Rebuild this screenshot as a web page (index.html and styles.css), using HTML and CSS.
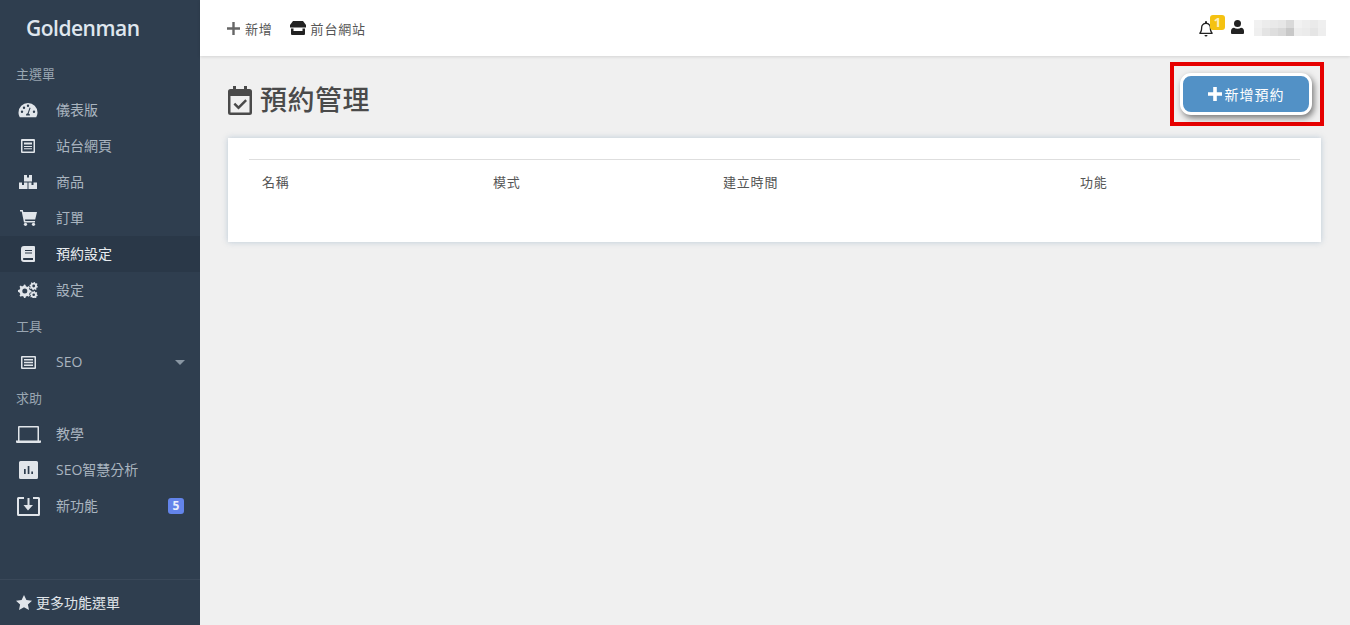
FILE: index.html
```html
<!DOCTYPE html>
<html lang="zh-Hant">
<head>
<meta charset="utf-8">
<title>預約管理</title>
<link rel="stylesheet" href="styles.css">
</head>
<body>
<div class="app">
  <aside class="sidebar">
    <div class="logo">Goldenman</div>
    <nav class="menu">
      <div class="label label-first">主選單</div>
      <a class="item"><span class="ico"><svg width="20" height="16" viewBox="0 0 20 16"><path class="f" fill-rule="evenodd" d="M10 1a9.500 9.500 0 0 0-9.500 9.500c0 1.700.5 3.300 1.300 4.700h16.400c.8-1.400 1.300-3 1.300-4.700A9.500 9.500 0 0 0 10 1zM4 11a1.200 1.200 0 1 1 0-2.400A1.200 1.200 0 0 1 4 11zm2-4a1.200 1.200 0 1 1 0-2.400A1.200 1.200 0 0 1 6 7zm4-2a1.200 1.200 0 1 1 0-2.400A1.200 1.200 0 0 1 10 5zm2 8.500H8a2 2 0 0 1 1.600-2.300l2-5.700 1 .4-2 5.500a2 2 0 0 1 1.400 2.100zM16 11a1.200 1.200 0 1 1 0-2.400 1.200 1.200 0 0 1 0 2.400z"/></svg></span><span class="txt">儀表版</span></a>
      <a class="item"><span class="ico"><svg width="14" height="14" viewBox="0 0 14 14"><path class="f" fill-rule="evenodd" d="M1 0h12a1 1 0 0 1 1 1v12a1 1 0 0 1-1 1H1a1 1 0 0 1-1-1V1a1 1 0 0 1 1-1zm.5 2v10.500h11V2zM3 3.500h8v2H3zM3 7h8v1H3zm0 2.200h8v1H3z"/></svg></span><span class="txt">站台網頁</span></a>
      <a class="item"><span class="ico"><svg width="18" height="16" viewBox="0 0 18 16"><path class="f" fill-rule="evenodd" d="M5 1h8v6.500H5zM8 1v2.500h2V1zM0 8.500h8.500V15H0zm3 0V11h2V8.500zm6.500 0H18V15H9.500zm3 0V11h2V8.500z"/></svg></span><span class="txt">商品</span></a>
      <a class="item"><span class="ico"><svg width="17" height="16" viewBox="0 0 17 16"><path class="f" d="M0 0h2.800l.5 2H17l-1.800 7.500H5l.3 1.500h9.700v1.500H4L1.700 1.500H0z"/><circle class="f" cx="5.500" cy="14.300" r="1.600"/><circle class="f" cx="13.500" cy="14.300" r="1.600"/></svg></span><span class="txt">訂單</span></a>
      <a class="item active"><span class="ico"><svg width="14" height="16" viewBox="0 0 14 16"><path class="f" fill-rule="evenodd" d="M3 0h10a1 1 0 0 1 1 1v14a1 1 0 0 1-1 1H3a3 3 0 0 1-3-3V3a3 3 0 0 1 3-3zm1 4v1h7V4zm0 2.500v1h7v-1zM2 13c0 .6.400 1 1 1h9v-2H3c-.6 0-1 .4-1 1z"/></svg></span><span class="txt">預約設定</span></a>
      <a class="item"><span class="ico"><svg width="20" height="16" viewBox="0 0 20 16"><path class="f" fill-rule="evenodd" d="M6 2.500l1.400.3.500 1.500 1.500.6 1.300-.8 1.200 1.200-.8 1.300.6 1.500 1.500.4v1.800l-1.500.4-.6 1.500.8 1.300-1.200 1.200-1.300-.8-1.500.6-.5 1.500H6l-.5-1.500-1.500-.6-1.300.8-1.200-1.200.8-1.300-.6-1.500L0 9.800V8l1.700-.4.600-1.500-.8-1.300L2.700 3.600l1.300.8 1.500-.6zM6.800 6.400a2.500 2.500 0 1 0 0 5 2.500 2.500 0 0 0 0-5zM16 0l1 .2.200 1 .8.400.9-.4.600.9-.6.800.1 1 .9.500-.2 1-1 .2-.5.800.4.900-.9.600-.8-.6-1 .1-.5.900-1-.2-.2-1-.8-.5-.9.400-.6-.9.600-.8-.1-1-.9-.5.200-1 1-.2.500-.8-.4-.9.900-.6.800.6 1-.1zm-.3 2.600a1.400 1.400 0 1 0 0 2.800 1.400 1.400 0 0 0 0-2.800zM16 9l.9.200.2.900.8.400.8-.4.600.8-.5.700.1 1 .8.500-.2.900-.9.200-.5.700.4.800-.8.600-.7-.5-1 .1-.5.800-.9-.2-.2-.9-.7-.5-.8.400-.6-.8.500-.7-.1-1-.8-.5.200-.9.900-.2.500-.7-.4-.8.800-.6.700.5 1-.1zm-.3 2.400a1.300 1.300 0 1 0 0 2.600 1.300 1.300 0 0 0 0-2.600z"/></svg></span><span class="txt">設定</span></a>
      <div class="label">工具</div>
      <a class="item"><span class="ico"><svg width="15" height="13" viewBox="0 0 15 13"><path class="f" fill-rule="evenodd" d="M1 0h13a1 1 0 0 1 1 1v11a1 1 0 0 1-1 1H1a1 1 0 0 1-1-1V1a1 1 0 0 1 1-1zm.5 1.500v10h12v-10zM3 3h9v1.500H3zm0 2.800h9v1.500H3zm0 2.700h9V10H3z"/></svg></span><span class="txt grow">SEO</span><span class="caret"></span></a>
      <div class="label">求助</div>
      <a class="item"><span class="ico"><svg width="25" height="17" viewBox="0 0 25 17"><path class="f" fill-rule="evenodd" d="M3 0h19a1 1 0 0 1 1 1v13.500h-1.500V1.500h-18v13H2V1a1 1 0 0 1 1-1zM0 14.500h25V16a1 1 0 0 1-1 1H1a1 1 0 0 1-1-1z"/></svg></span><span class="txt">教學</span></a>
      <a class="item"><span class="ico"><svg width="19" height="18" viewBox="0 0 19 18"><path class="f" fill-rule="evenodd" d="M1.500 0h16A1.500 1.500 0 0 1 19 1.500v15a1.500 1.500 0 0 1-1.500 1.500h-16A1.500 1.500 0 0 1 0 16.500v-15A1.500 1.500 0 0 1 1.500 0zM5 8v5h1.700V8zm3.700-3v8h1.700V5zm3.600 5.500V13H14v-2.500z"/></svg></span><span class="txt">SEO智慧分析</span></a>
      <a class="item"><span class="ico"><svg width="23" height="19" viewBox="0 0 23 19"><path class="f" fill-rule="evenodd" d="M1.500 0H7v2H2v15h19V2h-5V0h5.500A1.500 1.500 0 0 1 23 1.500v16a1.500 1.500 0 0 1-1.500 1.500h-20A1.500 1.500 0 0 1 0 17.500v-16A1.500 1.500 0 0 1 1.500 0zM10.500 1h2v7h3.500l-5 5.500L6.500 8h4z"/></svg></span><span class="txt grow">新功能</span><span class="badge">5</span></a>
    </nav>
    <div class="more"><svg width="16" height="15" viewBox="0 0 16 15"><path class="f" d="M8 0l2.400 5 5.600.7-4.100 3.800 1.100 5.500L8 12.300 3 15l1.100-5.500L0 5.700 5.600 5z"/></svg><span class="txt">更多功能選單</span></div>
  </aside>
  <div class="main">
    <header class="topbar">
      <a class="tool"><svg width="13" height="13" viewBox="0 0 13 13"><path class="g" d="M5.300 0h2.400v5.300H13v2.400H7.700V13H5.300V7.700H0V5.300h5.300z"/></svg><span>新增</span></a>
      <a class="tool tool-store"><svg width="16" height="14" viewBox="0 0 16 14"><path class="d" fill-rule="evenodd" d="M3 0h10l3 4v2.500H0V4zM1 7.500h14V13a1 1 0 0 1-1 1H2a1 1 0 0 1-1-1zm2.500 0V10h9V7.500z"/></svg><span>前台網站</span></a>
      <div class="spacer"></div>
      <div class="bell"><svg width="14" height="16" viewBox="0 0 14 16"><path class="d" fill-rule="evenodd" d="M7 0a1 1 0 0 1 1 1v.8c2.300.4 4 2.400 4 4.700 0 2.800.7 4 1.600 5.200.3.400.1 1.300-.6 1.300H1c-.7 0-.9-.9-.6-1.300C1.300 10.500 2 9.300 2 6.500c0-2.300 1.700-4.300 4-4.700V1a1 1 0 0 1 1-1zm0 3C5 3 3.300 4.500 3.300 6.500c0 2.500-.5 4.100-1.200 5.300h9.800c-.7-1.200-1.200-2.800-1.200-5.300C10.700 4.500 9 3 7 3zM5.500 14h3a1.500 1.500 0 0 1-3 0z"/></svg><span class="bell-count">1</span></div>
      <svg class="user" width="13" height="14" viewBox="0 0 13 14"><circle class="d" cx="6.500" cy="3.500" r="3.500"/><path class="d" d="M3 7.800c1 .6 2.200 1 3.500 1s2.500-.4 3.500-1c1.800 0 3 1.400 3 3.200V13a1 1 0 0 1-1 1H1a1 1 0 0 1-1-1v-2c0-1.800 1.200-3.200 3-3.200z"/></svg>
      <div class="username"></div>
    </header>
    <main class="content">
      <div class="page-head">
        <h1 class="title"><svg width="24" height="29" viewBox="0 0 24 29"><path class="t" fill-rule="evenodd" d="M5 0h3v3h8V0h3v3h2.500A2.500 2.500 0 0 1 24 5.500v21a2.500 2.500 0 0 1-2.500 2.500h-19A2.500 2.500 0 0 1 0 26.500v-21A2.500 2.500 0 0 1 2.500 3H5zM2.500 10v16.500h19V10zm14.800 3.200l1.700 1.700-8.500 8.500-5-5 1.700-1.700 3.300 3.300z"/></svg><span>預約管理</span></h1>
        <div class="highlight"><button class="add-btn"><svg width="14" height="14" viewBox="0 0 14 14"><path class="w" d="M5.200 0h3.600v5.200H14v3.600H8.800V14H5.200V8.800H0V5.200h5.200z"/></svg><span>新增預約</span></button></div>
      </div>
      <section class="card">
        <table class="table">
          <thead>
            <tr><th class="c1">名稱</th><th class="c2">模式</th><th class="c3">建立時間</th><th>功能</th></tr>
          </thead>
        </table>
      </section>
    </main>
  </div>
</div>
</body>
</html>
```
FILE: styles.css
```css
* { box-sizing: border-box; }
html, body { margin: 0; height: 100%; overflow: hidden; }
body { font-family: "Open Sans", "Noto Sans CJK TC", sans-serif; font-size: 14px; color: #555; background: #f0f0f0; }
.app { display: flex; height: 625px; }
svg { display: block; flex: none; }
.f { fill: #e1e5ea; }
.g { fill: #666; }
.d { fill: #222; }
.t { fill: #4a4a4a; }
.w { fill: #fff; }

.sidebar { width: 200px; flex: none; background: #2f3e4f; display: flex; flex-direction: column; }
.logo { height: 57px; padding: 13px 0 0 26px; font-size: 21px; letter-spacing: -.5px; line-height: 30px; font-weight: 600; color: #dfe6ee; }
.menu { flex: 1; }
.label { height: 36px; line-height: 36px; padding-left: 16px; font-size: 13px; color: #9aa6b2; }
.label-first { height: 35px; line-height: 34px; }
.item { height: 36px; display: flex; align-items: center; padding-right: 16px; color: #a9b4bf; font-size: 14px; }
.txt { padding-bottom: 2px; }
.item.active { background: #2a3848; color: #e8ecf0; }
.ico { width: 56px; padding-left: 16px; display: flex; justify-content: center; padding-right: 16px; }
.grow { flex: 1; }
.caret { width: 0; height: 0; border-left: 5px solid transparent; border-right: 5px solid transparent; border-top: 5px solid #8996a3; margin-right: -1px; }
.badge { width: 16px; height: 16px; border-radius: 3px; background: #6384ea; color: #e8eefc; font-size: 12px; font-weight: 700; line-height: 16px; text-align: center; }
.more { height: 46px; border-top: 1px solid #3a4859; display: flex; align-items: center; gap: 4px; padding-left: 16px; font-size: 14px; color: #e0e5ea; }

.main { flex: 1; min-width: 0; display: flex; flex-direction: column; }
.topbar { height: 56px; flex: none; background: #fff; box-shadow: 0 1px 3px rgba(0,0,0,.12); display: flex; align-items: center; padding: 0 24px 0 27px; }
.tool { display: flex; align-items: center; gap: 5px; font-size: 13px; letter-spacing: .8px; color: #555; }
.tool-store { margin-left: 17px; }
.spacer { flex: 1; }
.bell { position: relative; margin-right: 18px; margin-top: 2px; }
.bell-count { position: absolute; left: 11px; top: -6px; width: 15px; height: 15px; border-radius: 3px; background: #f5c211; color: #fdf0bd; font-size: 13px; font-weight: 700; line-height: 15px; text-align: center; }
.user { margin-right: 10px; margin-top: -3px; }
.username { width: 72px; height: 16px; background-image: linear-gradient(90deg, #f1f1f1 0 8px, #ececec 8px 16px, #e9e9e9 16px 24px, #e6e6e6 24px 32px, #d9d9d9 32px 40px, #f2f2f2 40px 48px, #eeeeee 48px 56px, #eaeaea 56px 64px, #efefef 64px 72px), linear-gradient(90deg, #efefef 0 8px, #e4e4e4 8px 16px, #dedede 16px 24px, #d8d8d8 24px 32px, #c8c8c8 32px 40px, #ededed 40px 48px, #ebebeb 48px 56px, #e5e5e5 56px 64px, #eeeeee 64px 72px); background-size: 100% 8px; background-position: top, bottom; background-repeat: no-repeat; }

.content { flex: 1; padding: 6px 29px 0 28px; }
.page-head { display: flex; align-items: flex-start; justify-content: space-between; height: 64px; margin-right: -3px; }
.title { margin: 0; padding-top: 20px; display: flex; align-items: center; gap: 8px; font-size: 27px; letter-spacing: .5px; font-weight: 500; color: #4a4a4a; line-height: 36px; }
.highlight { border: 4px solid #e60000; padding: 7px 8px 0 6px; width: 154px; height: 64px; display: flex; }
.add-btn { width: 132px; height: 42px; border: 3px solid #fff; border-radius: 11px; background: #5291c6; box-shadow: 2px 3px 6px rgba(0,0,0,.5); color: #fff; font-family: inherit; font-size: 14px; letter-spacing: 1px; display: flex; align-items: center; justify-content: center; gap: 3px; padding: 0; }

.card { margin-top: 12px; height: 104px; background: #fff; box-shadow: 0 0 6px rgba(120,150,180,.45); padding: 21px 21px 0; }
.table { width: 100%; border-collapse: collapse; border-top: 1px solid #dedede; table-layout: fixed; }
.table th { text-align: left; font-weight: 400; font-size: 13px; letter-spacing: .8px; color: #555; padding: 12px 13px 0; line-height: 20px; }
.c1 { width: 231px; }
.c2 { width: 230px; }
.c3 { width: 357px; }
```
